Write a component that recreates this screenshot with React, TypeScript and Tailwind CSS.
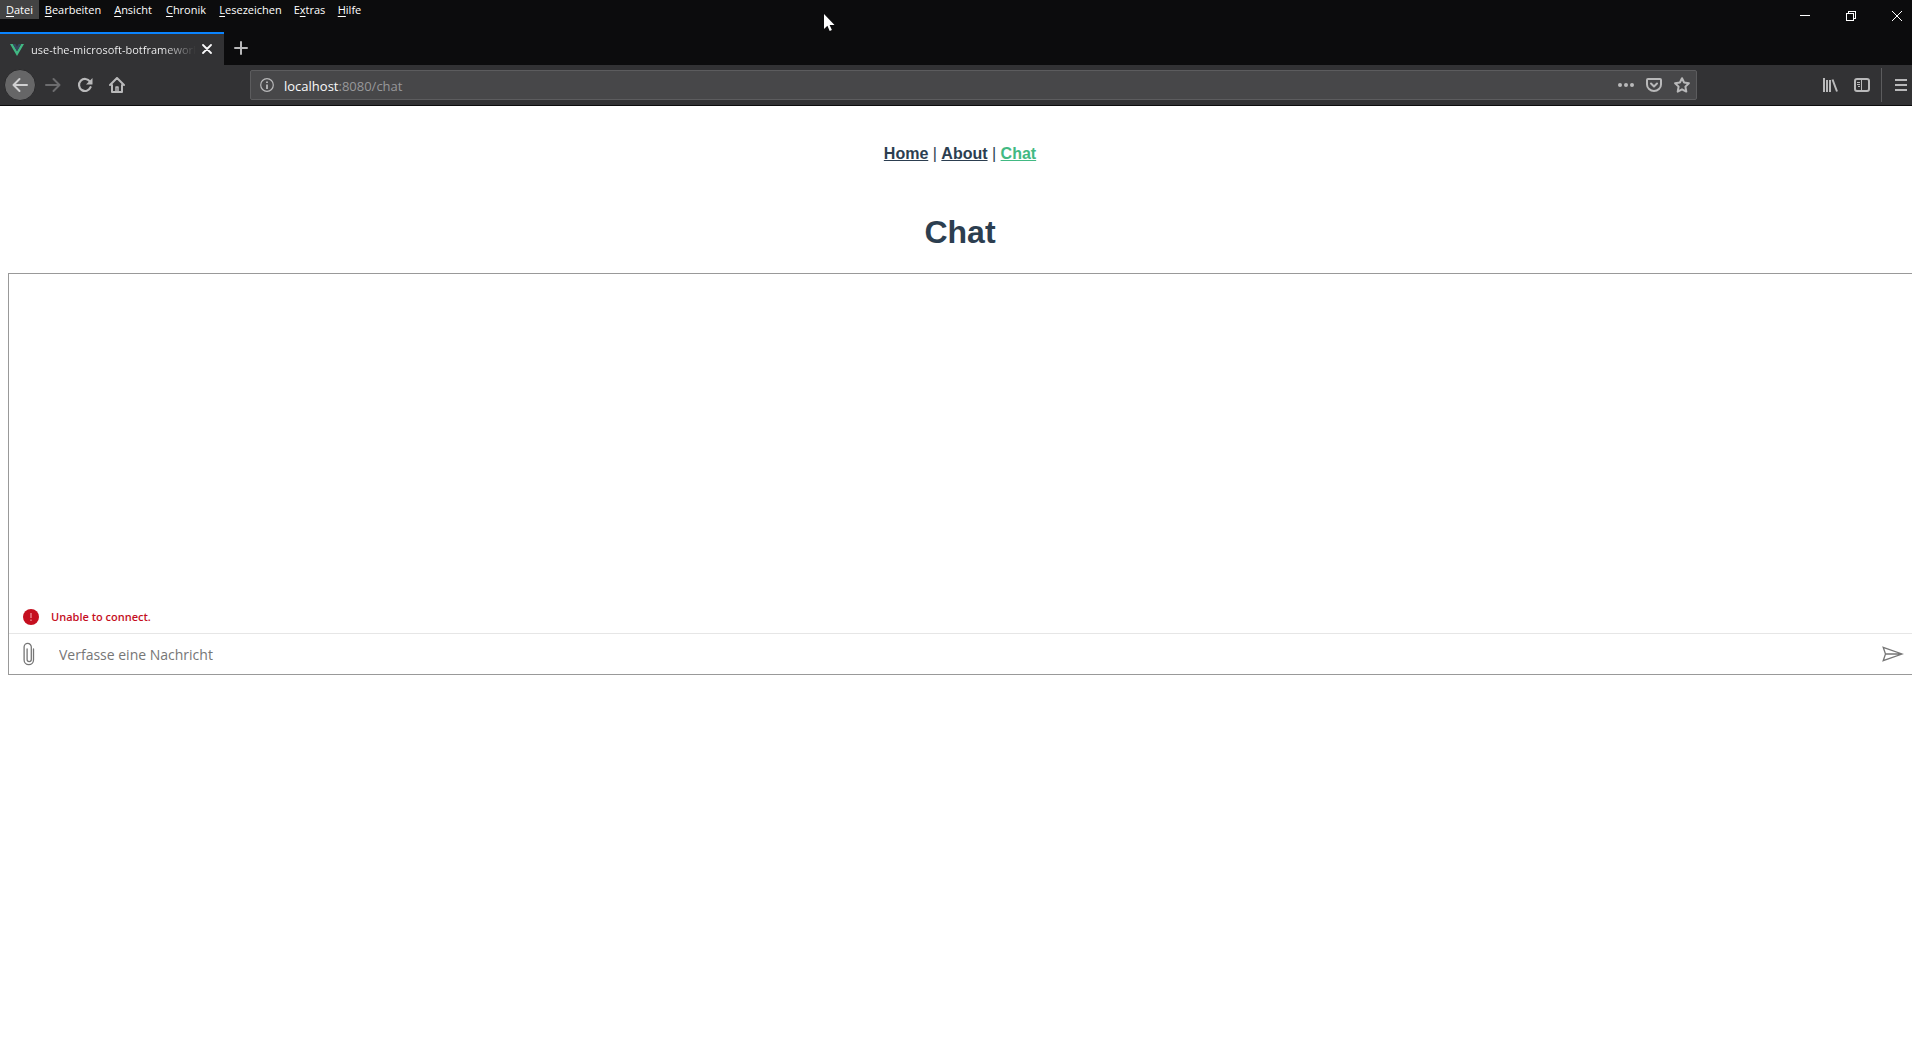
import React from "react";

const uiFont = "font-['Segoe_UI','Open_Sans',sans-serif]";

const menus = [
  { before: "", key: "D", after: "atei", width: "w-[39px]" },
  { before: "", key: "B", after: "earbeiten", width: "w-[68px]" },
  { before: "", key: "A", after: "nsicht", width: "w-[52px]" },
  { before: "", key: "C", after: "hronik", width: "w-[54px]" },
  { before: "", key: "L", after: "esezeichen", width: "w-[75px]" },
  { before: "E", key: "x", after: "tras", width: "w-[43px]" },
  { before: "", key: "H", after: "ilfe", width: "w-[37px]" },
];

function TitleBar() {
  return (
    <div className="flex h-8 justify-between bg-[#0c0c0d]">
      <nav aria-label="Menü" className="flex h-[19px] text-[11px] leading-5 font-medium text-white">
        {menus.map((m, i) => (
          <button
            key={m.after}
            className={`${m.width} flex justify-center whitespace-nowrap ${i === 0 ? "bg-[#434343]" : ""}`}
          >
            {m.before}
            <span className="underline underline-offset-2">{m.key}</span>
            {m.after}
          </button>
        ))}
      </nav>
      <div className="flex gap-4 text-white">
        <button aria-label="Minimieren" className="flex w-[30px] justify-center pt-[10px]">
          <svg width="10" height="11" shapeRendering="crispEdges">
            <path d="M0 5.5h10" stroke="currentColor" />
          </svg>
        </button>
        <button aria-label="Verkleinern" className="flex w-[30px] justify-center pt-[11px]">
          <svg width="10" height="10" fill="none" stroke="currentColor" shapeRendering="crispEdges">
            <path d="M.5 2.5h7v7h-7zM2.5 2.5v-2h7v7h-2" />
          </svg>
        </button>
        <button aria-label="Schließen" className="flex w-[30px] justify-center pt-[11px]">
          <svg width="10" height="10" stroke="currentColor">
            <path d="M0 0l10 10M10 0L0 10" />
          </svg>
        </button>
      </div>
    </div>
  );
}

function TabBar() {
  return (
    <div className="flex h-[33px] bg-[#0c0c0d]">
      <div className="flex w-56 items-center border-t-2 border-[#0a84ff] bg-[#323234] pl-2.5">
        <svg width="14" height="12" viewBox="0 0 14 12" className="shrink-0">
          <path d="M0 0h2.8L7 7.2 11.2 0H14L7 12z" fill="#41b883" />
          <path d="M2.8 0h2.6L7 2.8 8.6 0h2.6L7 7.2z" fill="#35495e" />
        </svg>
        <span className="ml-[7px] w-[165px] overflow-hidden bg-linear-to-r from-[#f9f9fa] from-80% to-transparent bg-clip-text pt-0.5 text-[11px] font-medium whitespace-nowrap text-transparent">
          use-the-microsoft-botframework
        </span>
        <button aria-label="Tab schließen" className="ml-1.5 pb-0.5 text-[#f9f9fa]">
          <svg width="10" height="10" stroke="currentColor" strokeWidth="1.8" strokeLinecap="round">
            <path d="M1 1l8 8M9 1L1 9" />
          </svg>
        </button>
      </div>
      <button aria-label="Neuer Tab" className="px-2.5 pb-0.5 text-[#b9b9ba]">
        <svg width="14" height="14" stroke="currentColor" strokeWidth="2" strokeLinecap="round">
          <path d="M7 1v12M1 7h12" />
        </svg>
      </button>
    </div>
  );
}

function Toolbar() {
  return (
    <div className="flex h-[41px] items-center border-b border-[#0c0c0d] bg-[#323234] text-[#b9b9ba]">
      <div className="flex w-[250px] shrink-0 items-center pl-1">
        <button
          aria-label="Zurück"
          className="flex size-8 items-center justify-center rounded-full border border-[#29292b] bg-[#666667] text-[#d0d0d1]"
        >
          <svg width="16" height="16" fill="none" stroke="currentColor" strokeWidth="2" strokeLinecap="round" strokeLinejoin="round">
            <path d="M15 8H1.5M7.5 2l-6 6 6 6" />
          </svg>
        </button>
        <button aria-label="Vor" className="ml-[9px] text-[#6c6c6e]">
          <svg width="16" height="16" fill="none" stroke="currentColor" strokeWidth="2" strokeLinecap="round" strokeLinejoin="round">
            <path d="M1 8h13.5M8.5 2l6 6-6 6" />
          </svg>
        </button>
        <button aria-label="Neu laden" className="ml-4">
          <svg width="16" height="16" viewBox="0 0 16 16" fill="none">
            <path d="M13 4.6A6 6 0 1 0 13.6 10.2" stroke="currentColor" strokeWidth="2.2" strokeLinecap="round" />
            <path d="M15.5 1v6a.5.5 0 0 1-.5.5H9z" fill="currentColor" />
          </svg>
        </button>
        <button aria-label="Startseite" className="ml-4">
          <svg width="16" height="16" viewBox="0 0 16 16" fill="none" stroke="currentColor" strokeWidth="2" strokeLinecap="round" strokeLinejoin="round">
            <path d="M1 8l7-7 7 7M3 8v7h10V8" />
            <path d="M7 14v-4h2v4" strokeWidth="1.5" />
          </svg>
        </button>
      </div>
      <div className="flex h-[30px] min-w-0 flex-1 items-center rounded-xs border border-[#5c5c5e] bg-[#474749] pr-1.5 pl-[9px]">
        <svg width="14" height="14" className="shrink-0" fill="none" stroke="currentColor">
          <circle cx="7" cy="7" r="6.3" strokeWidth="1.2" />
          <path d="M7 6.5V11M7 3.4v1.7" strokeWidth="1.8" />
        </svg>
        <div className="relative ml-2.5 flex-1 pt-0.5 text-[13px] leading-5">
          <div aria-hidden="true" className="text-[#98989a]">
            <span className="text-[#f9f9fa]">localhost</span>:8080/chat
          </div>
          <input
            aria-label="Adresse"
            defaultValue="localhost:8080/chat"
            className="absolute inset-0 w-full bg-transparent text-transparent outline-none"
          />
        </div>
        <button aria-label="Seitenaktionen">
          <svg width="16" height="16" fill="currentColor">
            <circle cx="2" cy="8" r="2" />
            <circle cx="8" cy="8" r="2" />
            <circle cx="14" cy="8" r="2" />
          </svg>
        </button>
        <button aria-label="Pocket" className="ml-3">
          <svg width="16" height="16" fill="none" stroke="currentColor" strokeWidth="2" strokeLinecap="round" strokeLinejoin="round">
            <path d="M2 2h12a1 1 0 0 1 1 1v4.5a7 6.5 0 0 1-14 0V3a1 1 0 0 1 1-1z" />
            <path d="M5 6.5l3 3 3-3" />
          </svg>
        </button>
        <button aria-label="Lesezeichen" className="ml-3">
          <svg width="16" height="16" fill="none" stroke="currentColor" strokeWidth="2" strokeLinejoin="round">
            <path d="M8 1.2l2.1 4.3 4.8.7-3.5 3.4.9 5L8 12.3l-4.3 2.3.9-5L1.1 6.200l4.800-.7z" />
          </svg>
        </button>
      </div>
      <div className="flex w-[215px] shrink-0 items-center justify-end">
        <button aria-label="Bibliothek">
          <svg width="16" height="16" fill="none" stroke="currentColor" strokeWidth="2">
            <path d="M2 1v14M5 3v12M8 3v12M10.500 2.500L15 14.500" />
          </svg>
        </button>
        <button aria-label="Seitenleiste" className="ml-4">
          <svg width="16" height="16" fill="none" stroke="currentColor">
            <rect x="1" y="2" width="14" height="12" rx="2" strokeWidth="2" />
            <path d="M7.500 2v12M3 5.500h3M3 7.500h3M4 9.500h2" />
          </svg>
        </button>
        <span className="ml-[11px] h-[34px] w-px bg-[#5c5c5e]" />
        <button aria-label="Menü öffnen" className="mr-[5px] ml-[13px]">
          <svg width="12" height="16" stroke="currentColor" strokeWidth="2">
            <path d="M0 3h12M0 8h12M0 13h12" />
          </svg>
        </button>
      </div>
    </div>
  );
}

function ChatPage() {
  return (
    <main className="pl-2 text-center font-['Liberation_Sans',Arial,sans-serif] text-[#2c3e50]">
      <nav className="pt-[39px] pb-[30px] text-base leading-[18px]">
        <a href="#home" className="font-bold underline">Home</a> |{" "}
        <a href="#about" className="font-bold underline">About</a> |{" "}
        <a href="#chat" className="font-bold text-[#42b983] underline">Chat</a>
      </nav>
      <h1 className="mt-[21px] mb-[22px] text-[32px] leading-9 font-bold">Chat</h1>
      <section className={`mt-[23px] flex flex-col border-y border-l border-[#999999] text-left ${uiFont}`}>
        <div className="h-[327px]" />
        <div role="alert" className="flex h-8 items-center pl-3.5">
          <svg width="16" height="16">
            <circle cx="8" cy="8" r="8" fill="#c50f1f" />
            <path d="M8 4v5M8 10.500v1.500" stroke="#ee9aa2" strokeWidth="1.200" />
          </svg>
          <span className="ml-3 text-[11px] font-semibold text-[#c50f1f]">Unable to connect.</span>
        </div>
        <form
          className="flex h-[41px] items-center border-t border-[#e6e6e6] text-[#767676]"
          onSubmit={(e) => e.preventDefault()}
        >
          <button type="button" aria-label="Datei anhängen" className="flex w-10 justify-center">
            <svg width="12" height="24" viewBox="0 0 12 24" fill="none" stroke="currentColor" strokeWidth="1.300" strokeLinecap="round">
              <path d="M10.500 7v11a4.700 4.700 0 0 1-9.400 0V5a3.600 3.600 0 0 1 7.200 0v12.500a2.100 2.100 0 0 1-4.200 0V7" />
            </svg>
          </button>
          <input
            aria-label="Verfasse eine Nachricht"
            placeholder="Verfasse eine Nachricht"
            className="h-full min-w-0 flex-1 pl-2.5 text-[14px] outline-none placeholder:text-[#767676]"
          />
          <button type="submit" aria-label="Senden" className="flex w-[38px] justify-center">
            <svg width="22" height="16" viewBox="0 0 22 16" fill="none" stroke="currentColor" strokeWidth="1.300">
              <path d="M1.200 1.300L20 8 1.200 14.700 3.500 8zM3.500 8H20" />
            </svg>
          </button>
        </form>
      </section>
    </main>
  );
}

export default function App() {
  return (
    <div className="min-h-screen overflow-x-hidden bg-white">
      <header className={uiFont}>
        <TitleBar />
        <TabBar />
        <Toolbar />
      </header>
      <ChatPage />
      <svg
        width="12"
        height="18"
        viewBox="0 0 12 18"
        className="pointer-events-none absolute top-[14px] left-[43.1%]"
        aria-hidden="true"
      >
        <path d="M0 0v15l3.400-3.200 2.300 5.200 2.200-1-2.300-5H10.500z" fill="#fff" />
      </svg>
    </div>
  );
}
